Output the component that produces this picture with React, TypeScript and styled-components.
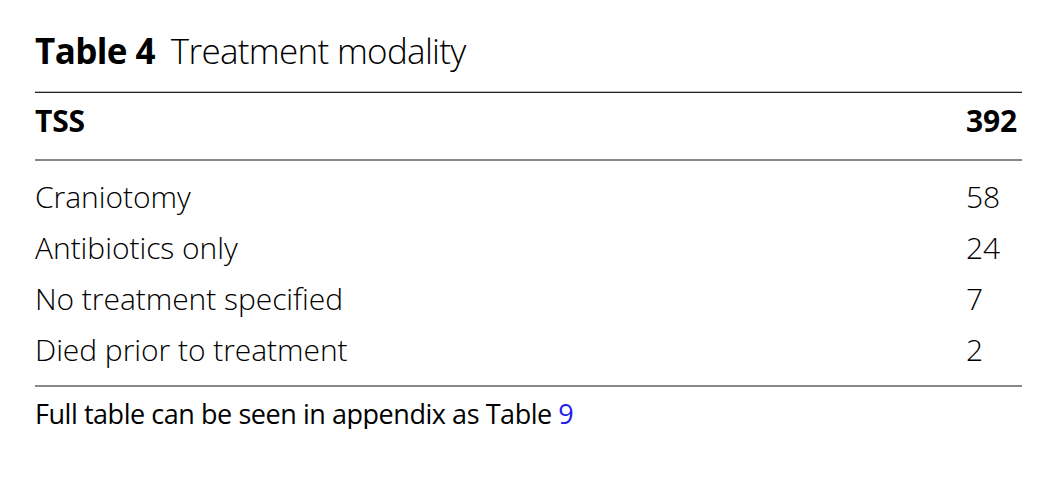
import React from "react";
import styled, { createGlobalStyle } from "styled-components";

const Global = createGlobalStyle`
  html, body { margin: 0; padding: 0; background: #fff; }
  body { font-family: "Open Sans", "Noto Sans", sans-serif; color: #000; }
`;

const Wrap = styled.div`
  padding: 28px 36px 0 35px;
  width: 987px;
`;

const Caption = styled.div`
  font-size: 35px;
  line-height: 46px;
  height: 64px;
  font-weight: 350;
  letter-spacing: -0.7px;
`;

const CapLabel = styled.span`
  font-weight: 700;
  letter-spacing: -0.6px;
  margin-right: 16px;
`;

const Table = styled.div`
  border-top: 1px solid #222;
  box-shadow: 0 -1px 0 #bbb;
  border-bottom: 2px solid #888;
`;

const HeadRow = styled.div`
  display: grid;
  grid-template-columns: 1fr 56px;
  height: 56px;
  padding-top: 10px;
  line-height: 36px;
  align-items: start;
  font-weight: 700;
  font-size: 30px;
  border-bottom: 2px solid #888;
  letter-spacing: -0.2px;
`;

const Body = styled.div`
  padding: 10px 0 10px;
`;

const Row = styled.div`
  display: grid;
  grid-template-columns: 1fr 56px;
  height: 51px;
  line-height: 51px;
  font-size: 30px;
  font-weight: 350;
  letter-spacing: -0.05px;
`;

const Num = styled.span`
  text-align: left;
`;

const Footer = styled.div`
  font-size: 27px;
  line-height: 30px;
  padding-top: 12px;
  letter-spacing: -0.45px;
`;

const Ref = styled.span`
  color: #1d1df0;
`;

const rows: [string, string][] = [
  ["Craniotomy", "58"],
  ["Antibiotics only", "24"],
  ["No treatment specified", "7"],
  ["Died prior to treatment", "2"],
];

export default function App() {
  return (
    <>
      <Global />
      <Wrap>
        <Caption>
          <CapLabel>Table 4</CapLabel>Treatment modality
        </Caption>
        <Table>
          <HeadRow>
            <span>TSS</span>
            <Num>392</Num>
          </HeadRow>
          <Body>
            {rows.map(([l, n]) => (
              <Row key={l}>
                <span>{l}</span>
                <Num>{n}</Num>
              </Row>
            ))}
          </Body>
        </Table>
        <Footer>
          Full table can be seen in appendix as Table <Ref>9</Ref>
        </Footer>
      </Wrap>
    </>
  );
}
